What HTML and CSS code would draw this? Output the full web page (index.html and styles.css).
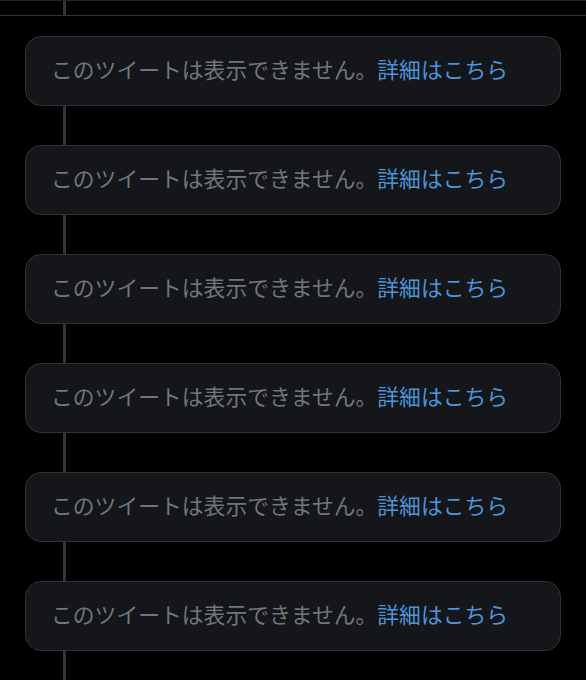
FILE: index.html
```html
<!DOCTYPE html>
<html lang="ja">
<head>
    <meta charset="UTF-8">
    <meta name="viewport" content="width=device-width, initial-scale=1.0">
    <title>スレッド</title>
    <link rel="stylesheet" href="styles.css">
</head>
<body>
    <div id="threadTop">
        <div class="link link-top"></div>
    </div>
    <div id="thread">
        <div class="tombstone">
            <p>このツイートは表示できません。<a href="#">詳細はこちら</a></p>
        </div>
        <div class="link"></div>
        <div class="tombstone">
            <p>このツイートは表示できません。<a href="#">詳細はこちら</a></p>
        </div>
        <div class="link"></div>
        <div class="tombstone">
            <p>このツイートは表示できません。<a href="#">詳細はこちら</a></p>
        </div>
        <div class="link"></div>
        <div class="tombstone">
            <p>このツイートは表示できません。<a href="#">詳細はこちら</a></p>
        </div>
        <div class="link"></div>
        <div class="tombstone">
            <p>このツイートは表示できません。<a href="#">詳細はこちら</a></p>
        </div>
        <div class="link"></div>
        <div class="tombstone">
            <p>このツイートは表示できません。<a href="#">詳細はこちら</a></p>
        </div>
        <div class="link"></div>
    </div>
</body>
</html>
```

FILE: styles.css
```css
body {
    font-family: "Noto Sans CJK JP", "Noto Sans", sans-serif;
    background-color: black;
    margin: 0;
    padding: 0;
    color: #71767b;
    width: 586px;
    height: 680px;
    overflow: hidden;
}

#threadTop {
    height: 16px;
    border-top: 1px solid #202327;
    border-bottom: 1px solid #2f3336;
    box-sizing: border-box;
    padding-left: 63px;
}

#thread {
    display: flex;
    flex-direction: column;
    padding: 20px 25px 0 25px;
}

.link {
    width: 3px;
    height: 39px;
    margin-left: 38px;
    background-color: #333639;
}

.link-top {
    height: 14px;
    margin-left: 0;
}

.tombstone {
    height: 70px;
    box-sizing: border-box;
    border: 1px solid #2f3336;
    border-radius: 16px;
    background-color: #141619;
    display: flex;
    align-items: center;
    padding-left: 25px;
    padding-bottom: 5px;
}

.tombstone p {
    margin: 0;
    font-size: 21.8px;
    line-height: 1;
    white-space: nowrap;
}

.tombstone a {
    color: #4b94d8;
    text-decoration: none;
}
```
